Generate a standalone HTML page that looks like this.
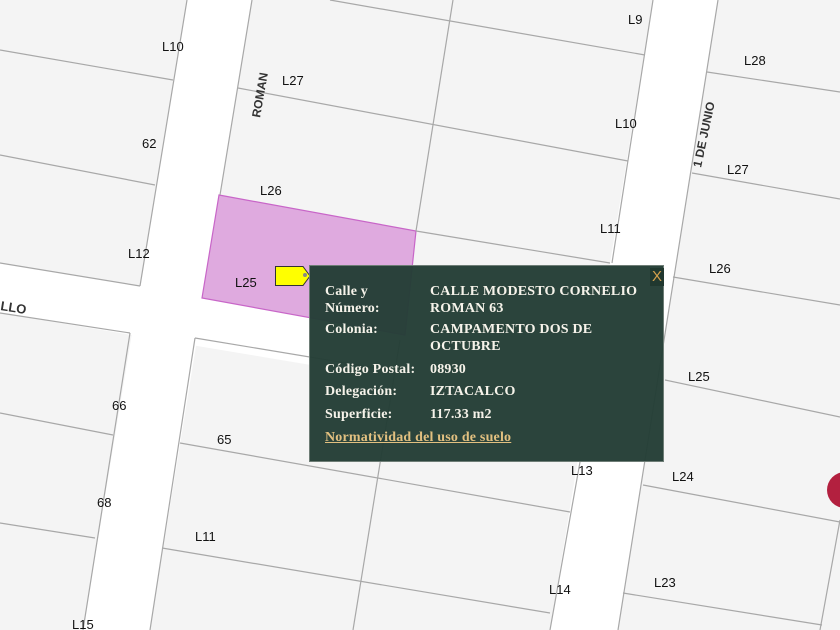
<!DOCTYPE html>
<html><head><meta charset="utf-8"><style>
html,body{margin:0;padding:0;width:840px;height:630px;overflow:hidden;background:#f4f4f4}
svg{position:absolute;left:0;top:0}
.pop{position:absolute;left:309px;top:265px;width:355px;height:197px;background:rgba(36,62,54,0.97);border:1px solid #6e7d76;box-sizing:border-box;font-family:"Liberation Serif",serif;font-weight:bold;font-size:14px;letter-spacing:0.2px;color:#f6f3ea;line-height:17px}
.pop div{position:absolute;white-space:nowrap}
.l{left:15px}.v{left:120px}
.x{position:absolute;left:340px;top:2px;width:14px;height:18px;background:#21382f;color:#d4a04c;font-family:"Liberation Sans",sans-serif;font-size:15px;font-weight:normal;letter-spacing:0;text-align:center;line-height:18px}
a{color:#e2c080;text-decoration:underline}
</style></head><body>
<svg width="840" height="630" xmlns="http://www.w3.org/2000/svg">
<rect width="840" height="630" fill="#f4f4f4"/>
<g fill="#ffffff">
<polygon points="187,0 252,0 150,630 83,630"/>
<polygon points="653,0 718,0 618,630 550,630"/>
<polygon points="0,263 640,368 640,420 0,313"/>
</g>
<polygon points="219,195 416,231 405,335 202,298" fill="#dfaadf" stroke="#c866c8" stroke-width="1.2"/>
<g stroke="#a8a8a8" stroke-width="1.2" fill="none">
<line x1="187" y1="0" x2="140" y2="286"/><line x1="130" y1="333" x2="83" y2="630"/>
<line x1="252" y1="0" x2="220" y2="195"/><line x1="195" y1="338" x2="150" y2="630"/>
<line x1="0" y1="263" x2="140" y2="286"/><line x1="0" y1="313" x2="130" y2="333"/>
<line x1="195" y1="338" x2="400" y2="372"/>
<line x1="653" y1="0" x2="612" y2="263"/><line x1="580" y1="462" x2="550" y2="630"/>
<line x1="718" y1="0" x2="618" y2="630"/>
<line x1="0" y1="50" x2="173" y2="80"/><line x1="0" y1="155" x2="155" y2="185"/>
<line x1="0" y1="413" x2="113" y2="435"/><line x1="0" y1="523" x2="95" y2="538"/>
<line x1="238" y1="88" x2="628" y2="161"/><line x1="330" y1="0" x2="645" y2="55"/>
<line x1="453" y1="0" x2="416" y2="231"/><line x1="416" y1="231" x2="610" y2="263"/>
<line x1="180" y1="443" x2="570" y2="512"/><line x1="162" y1="548" x2="550" y2="613"/>
<line x1="400" y1="340" x2="353" y2="630"/>
<line x1="707" y1="72" x2="840" y2="92"/><line x1="692" y1="173" x2="840" y2="199"/>
<line x1="673" y1="277" x2="840" y2="305"/><line x1="665" y1="380" x2="840" y2="417"/>
<line x1="643" y1="485" x2="840" y2="522"/><line x1="623" y1="593" x2="822" y2="625"/>
<line x1="840" y1="520" x2="820" y2="630"/>
</g>
<circle cx="845" cy="490" r="18" fill="#b3203f"/>
<g font-family="Liberation Sans, sans-serif" font-size="13" fill="#111">
<text x="162" y="51">L10</text><text x="282" y="85">L27</text><text x="142" y="148">62</text>
<text x="260" y="195">L26</text><text x="128" y="258">L12</text><text x="235" y="287">L25</text>
<text x="112" y="410">66</text><text x="97" y="507">68</text><text x="217" y="444">65</text>
<text x="195" y="541">L11</text><text x="72" y="629">L15</text>
<text x="628" y="24">L9</text><text x="744" y="65">L28</text><text x="615" y="128">L10</text>
<text x="600" y="233">L11</text><text x="727" y="174">L27</text><text x="709" y="273">L26</text>
<text x="688" y="381">L25</text><text x="571" y="475">L13</text><text x="672" y="481">L24</text>
<text x="549" y="594">L14</text><text x="654" y="587">L23</text>
<text font-weight="bold" font-size="12" fill="#333" transform="translate(260,118) rotate(-80)">ROMAN</text>
<text font-weight="bold" font-size="12" fill="#333" transform="translate(701,168) rotate(-78)">1 DE JUNIO</text>
<text font-weight="bold" font-size="13" fill="#333" transform="translate(0,310) rotate(9)">LLO</text>
</g>
<path d="M275.5,266.5 H303 L310,276 L303,285.5 H275.5 Z" fill="#ffff00" stroke="#333" stroke-width="1"/>
<circle cx="305" cy="275" r="2" fill="#888"/>
</svg>
<div class="pop">
<div class="x">X</div>
<div class="l" style="top:17px">Calle y<br>Número:</div>
<div class="v" style="top:17px">CALLE MODESTO CORNELIO<br>ROMAN 63</div>
<div class="l" style="top:55px">Colonia:</div>
<div class="v" style="top:55px">CAMPAMENTO DOS DE<br>OCTUBRE</div>
<div class="l" style="top:95px">Código Postal:</div>
<div class="v" style="top:95px">08930</div>
<div class="l" style="top:117px">Delegación:</div>
<div class="v" style="top:117px">IZTACALCO</div>
<div class="l" style="top:140px">Superficie:</div>
<div class="v" style="top:140px">117.33 m2</div>
<div class="l" style="top:163px"><a>Normatividad del uso de suelo</a></div>
</div>
</body></html>
